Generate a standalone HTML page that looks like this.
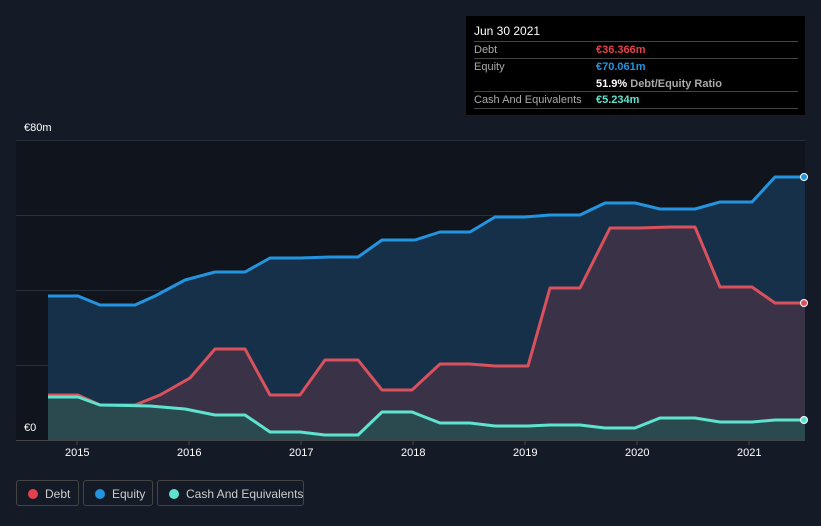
<!DOCTYPE html><html><head><style>
html,body{margin:0;width:821px;height:526px;overflow:hidden}
body{background:#151b26;font-family:"Liberation Sans",sans-serif;position:relative}
.tt{position:absolute;left:466px;top:16px;width:339px;height:99px;background:#000;color:#fff;font-size:11px}
.row{position:absolute;left:8px;width:324px;border-top:1px solid #444}
.l{position:absolute;left:0;color:#aaa}.v{position:absolute;left:122px;font-weight:bold;white-space:nowrap}
.leg{position:absolute;top:480px;height:26px;border:1px solid #444;border-radius:3px;color:#ccc;font-size:12px;line-height:26px;box-sizing:border-box;white-space:nowrap}
.leg i{position:absolute;left:11px;top:8px;width:10px;height:10px;border-radius:5px}
.leg span{position:absolute;left:28px}
.ax{position:absolute;top:447px;color:#fff;font-size:11px}
</style></head><body>
<svg width="821" height="526" style="position:absolute;left:0;top:0">
<rect x="16" y="140" width="789" height="300" fill="#10141c"/>
<g stroke="#2a303b" stroke-width="1"><line x1="16" y1="140.5" x2="805" y2="140.5"/><line x1="16" y1="215.5" x2="805" y2="215.5"/><line x1="16" y1="290.5" x2="805" y2="290.5"/><line x1="16" y1="365.5" x2="805" y2="365.5"/><line x1="16" y1="440.5" x2="805" y2="440.5" stroke="#444"/></g>
<polygon fill="#173049" points="48,440 48,296 78,296 100,305 135,305 155,296 185,280 215,272 245,272 270,258 300,258 330,257 358,257 382,240 415,240 440,232 470,232 495,217 525,217 550,215 580,215 605,203 635,203 660,209 695,209 720,202 752,202 775,177 805,177 805,440"/>
<polygon fill="#3a3347" points="48,440 48,395 78,395 100,405 135,405 160,395 190,378 215,349 245,349 270,395 300,395 325,360 358,360 382,390 412,390 440,364 470,364 495,366 528,366 550,288 580,288 610,228 640,228 670,227 695,227 720,287 752,287 775,303 805,303 805,440"/>
<polygon fill="#2a4a4f" points="48,440 48,397 78,397 100,405 150,406 185,409 215,415 245,415 270,432 300,432 325,435 358,435 382,412 412,412 440,423 470,423 495,426 528,426 550,425 580,425 605,428 635,428 660,418 695,418 720,422 752,422 775,420 805,420 805,440"/>
<g fill="none" stroke-width="3" stroke-linejoin="round">
<polyline stroke="#2394df" points="48,296 78,296 100,305 135,305 155,296 185,280 215,272 245,272 270,258 300,258 330,257 358,257 382,240 415,240 440,232 470,232 495,217 525,217 550,215 580,215 605,203 635,203 660,209 695,209 720,202 752,202 775,177 805,177"/>
<polyline stroke="#d9515d" points="48,395 78,395 100,405 135,405 160,395 190,378 215,349 245,349 270,395 300,395 325,360 358,360 382,390 412,390 440,364 470,364 495,366 528,366 550,288 580,288 610,228 640,228 670,227 695,227 720,287 752,287 775,303 805,303"/>
<polyline stroke="#5ee3cf" points="48,397 78,397 100,405 150,406 185,409 215,415 245,415 270,432 300,432 325,435 358,435 382,412 412,412 440,423 470,423 495,426 528,426 550,425 580,425 605,428 635,428 660,418 695,418 720,422 752,422 775,420 805,420"/>
</g>
<circle cx="804" cy="177" r="3.5" fill="#2394df" stroke="#fff"/><circle cx="804" cy="303" r="3.5" fill="#d9515d" stroke="#fff"/><circle cx="804" cy="420" r="3.5" fill="#5ee3cf" stroke="#fff"/>
<g stroke="#444"><line x1="77" y1="440" x2="77" y2="445"/><line x1="189" y1="440" x2="189" y2="445"/><line x1="301" y1="440" x2="301" y2="445"/><line x1="413" y1="440" x2="413" y2="445"/><line x1="525" y1="440" x2="525" y2="445"/><line x1="637" y1="440" x2="637" y2="445"/><line x1="749" y1="440" x2="749" y2="445"/></g>
</svg>
<div style="position:absolute;left:24px;top:122px;color:#fff;font-size:11px">€80m</div>
<div style="position:absolute;left:24px;top:422px;color:#fff;font-size:11px">€0</div>
<div class="ax" style="left:65px">2015</div><div class="ax" style="left:177px">2016</div><div class="ax" style="left:289px">2017</div><div class="ax" style="left:401px">2018</div><div class="ax" style="left:513px">2019</div><div class="ax" style="left:625px">2020</div><div class="ax" style="left:737px">2021</div>
<div class="tt">
<div style="position:absolute;left:8px;top:8px;font-size:12px">Jun 30 2021</div>
<div class="row" style="top:25px;height:16px"><span class="l" style="top:2px">Debt</span><span class="v" style="top:2px;color:#e5414c">€36.366m</span></div>
<div class="row" style="top:42px;height:33px"><span class="l" style="top:2px">Equity</span><span class="v" style="top:2px;color:#2394df">€70.061m</span><span class="v" style="top:19px;color:#fff">51.9% <b style="color:#aaa">Debt/Equity Ratio</b></span></div>
<div class="row" style="top:75px;height:16px;border-bottom:1px solid #444"><span class="l" style="top:2px">Cash And Equivalents</span><span class="v" style="top:2px;color:#5ee3cf">€5.234m</span></div>
</div>
<div class="leg" style="left:16px;width:63px"><i style="background:#e5414c"></i><span>Debt</span></div>
<div class="leg" style="left:83px;width:70px"><i style="background:#2394df"></i><span>Equity</span></div>
<div class="leg" style="left:157px;width:147px"><i style="background:#5ee3cf"></i><span>Cash And Equivalents</span></div>
</body></html>
